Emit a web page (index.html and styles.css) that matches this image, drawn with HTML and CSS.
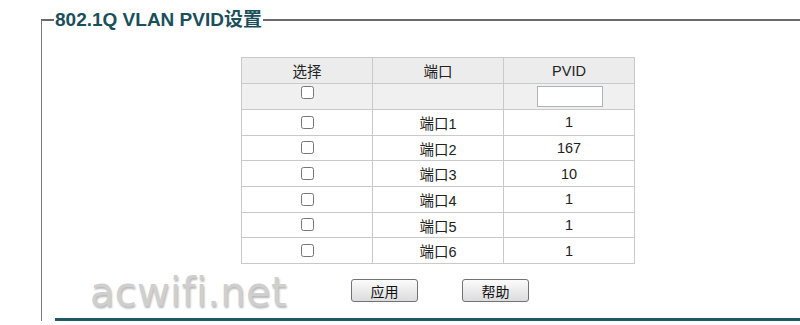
FILE: index.html
```html
<!DOCTYPE html>
<html>
<head>
<meta charset="utf-8">
<link rel="stylesheet" href="styles.css">
</head>
<body>
<fieldset class="panel">
  <legend class="panel-title">802.1Q VLAN PVID设置</legend>
  <table class="pvid-table">
    <tr class="head-row">
      <th>选择</th><th>端口</th><th>PVID</th>
    </tr>
    <tr class="all-row">
      <td><input type="checkbox" class="chk chk-all"></td>
      <td></td>
      <td><input type="text" class="pvid-input"></td>
    </tr>
    <tr class="data-row"><td><input type="checkbox" class="chk"></td><td>端口1</td><td>1</td></tr>
    <tr class="data-row"><td><input type="checkbox" class="chk"></td><td>端口2</td><td>167</td></tr>
    <tr class="data-row"><td><input type="checkbox" class="chk"></td><td>端口3</td><td>10</td></tr>
    <tr class="data-row"><td><input type="checkbox" class="chk"></td><td>端口4</td><td>1</td></tr>
    <tr class="data-row"><td><input type="checkbox" class="chk"></td><td>端口5</td><td>1</td></tr>
    <tr class="data-row"><td><input type="checkbox" class="chk"></td><td>端口6</td><td>1</td></tr>
  </table>
  <div class="actions">
    <button class="btn">应用</button>
    <button class="btn">帮助</button>
  </div>
  <div class="rule"></div>
  <div class="watermark">acwifi.net</div>
</fieldset>
</body>
</html>
```

FILE: styles.css
```css
html, body {
  margin: 0;
  padding: 0;
  background: #ffffff;
  overflow: hidden;
  font-family: "Liberation Sans", Arial, "Noto Sans CJK SC", sans-serif;
}

.panel {
  position: relative;
  margin: 8px 0 0 41px;
  padding: 0 0 0 14px;
  border: 0;
  border-top: 2px solid #6a6a6a;
  border-left: 1px solid #7a7a7a;
  min-width: 0;
}

.panel-title {
  margin-left: -2px;
  padding: 0 1px;
  font-size: 19px;
  font-weight: bold;
  color: #1a4f5b;
  line-height: 23px;
}

.pvid-table {
  margin: 26px 0 0 185px;
  border-collapse: collapse;
  font-size: 14.5px;
  color: #222;
}

.pvid-table th,
.pvid-table td {
  width: 130px;
  border: 1px solid #c9c9c9;
  text-align: center;
  vertical-align: middle;
  padding: 0;
  font-weight: normal;
}

.head-row th {
  height: 25px;
  background: #ececec;
}

.all-row td {
  height: 25px;
  background: #f0f0f0;
}

.data-row td {
  height: 24.7px;
}

.chk {
  width: 13px;
  height: 13px;
  margin: 0 0 2px 0;
  vertical-align: middle;
}

.chk-all {
  margin-bottom: 8px;
}

.pvid-input {
  box-sizing: border-box;
  width: 66px;
  height: 21px;
  margin: 0 0 0 1px;
  border: 1px solid #a9b4bd;
  vertical-align: middle;
}

.actions {
  display: flex;
  gap: 44px;
  margin: 15px 0 0 295px;
}

.btn {
  box-sizing: border-box;
  width: 67px;
  height: 23px;
  padding: 0;
  border: 1px solid #6f7378;
  border-radius: 3px;
  background: linear-gradient(#fbfbfb, #dcdcdc);
  font-family: "Liberation Sans", Arial, "Noto Sans CJK SC", sans-serif;
  font-size: 14px;
  color: #111;
}

.rule {
  margin: 16px 0 0 -1px;
  height: 3px;
  background: #1f5a64;
}

.watermark {
  position: absolute;
  left: 48px;
  top: 238px;
  font-family: "DejaVu Sans", sans-serif;
  font-size: 40px;
  color: #cfcfcf;
  text-shadow: 1px 2px 2px #b8b8b8;
  letter-spacing: 0.3px;
}
```
